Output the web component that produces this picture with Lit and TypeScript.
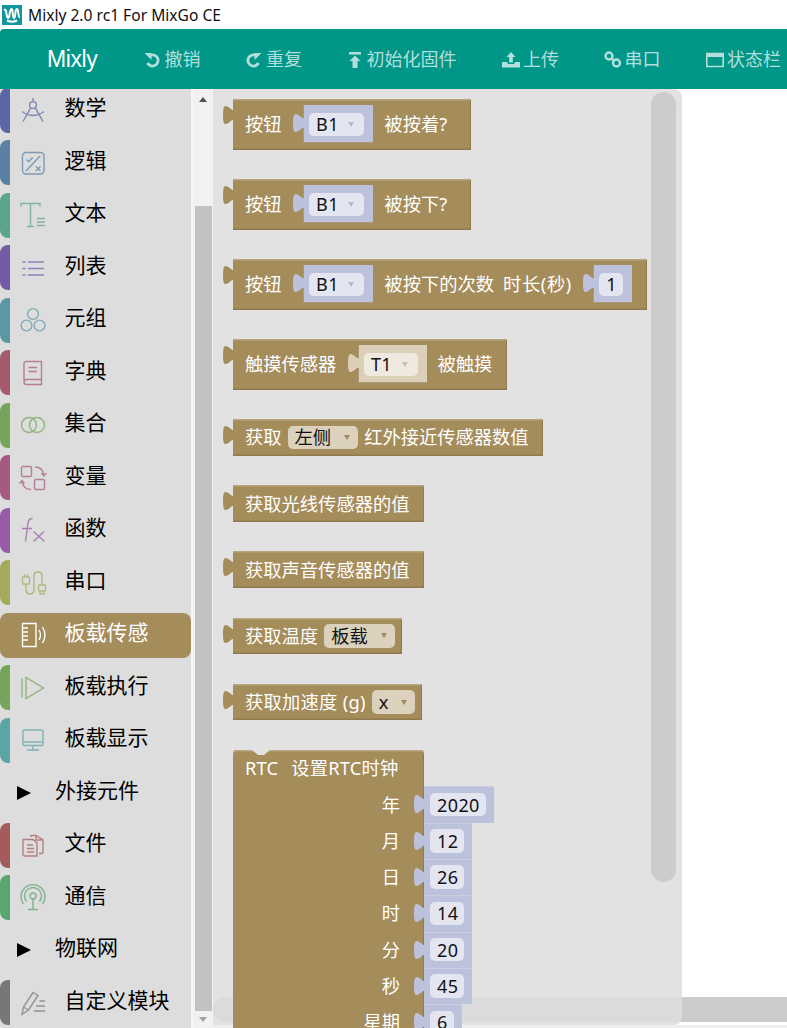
import { LitElement, html, css, svg } from "lit";
import { customElement } from "lit/decorators.js";

const icons: Record<string, any> = {
  math: svg`<circle cx="13" cy="8" r="3.4"/><path d="M13 1v3.5M10.8 10.6 3 24.5M15.2 10.6 23 24.5M2 14.5q11 8 22 0"/>`,
  logic: svg`<rect x="2.5" y="2.5" width="21.5" height="21.5" rx="3.5"/><path d="M6 21 20 6M6.5 9.5l2.2 2.2 4-4.2M16 16.5l4.5 4.5M20.5 16.5 16 21"/>`,
  text: svg`<path d="M1 4.5V1.5H20V4.5M10.5 1.5V24.5M7 24.5H14M17 16.5H25M17 20H25M17 23.5H25"/>`,
  list: svg`<path d="M2.5 7H5.5M8 7H24M2.5 13.5H5.5M8 13.5H24M2.5 20H5.5M8 20H24"/>`,
  tuple: svg`<circle cx="13" cy="7" r="5.4"/><circle cx="6.5" cy="18.5" r="5.4"/><circle cx="19.5" cy="18.5" r="5.4"/>`,
  dict: svg`<path d="M4 20V4q0-2.5 2.5-2.5H21.5V19.5H6.5Q4 19.5 4 22T6.5 24.5H22M21.5 19.5V24.5M8.5 7.5H17M8.5 11.5H17"/>`,
  set: svg`<circle cx="9" cy="13" r="7.5"/><circle cx="17" cy="13" r="7.5"/>`,
  var: svg`<rect x="1.5" y="1.5" width="10" height="10" rx="1.5"/><rect x="14.5" y="14.5" width="10" height="10" rx="1.5"/><path d="M15 2q8 0 9 8.5M21.5 8l2.5 3 2.5-3M11 24.5q-8 0-9-8.5M-.5 18.5 2 15.5l2.5 3"/>`,
  func: svg`<path d="M12.5 1.5Q8.5 1.5 8 6L5.5 24.5M2 11.5H12M13.5 14.5 24.5 24.5M24 14.5 13.5 24.5"/>`,
  serial: svg`<rect x="2.5" y="7" width="7" height="7" rx="1"/><path d="M4.5 7V4M7.5 7V4M6 14V20q0 4 4 4t4-4V5.5q0-3.5 4-3.5t4 3.5V15"/><rect x="18.5" y="15" width="7" height="6" rx="1"/><path d="M20 21V24H24V21"/>`,
  sensor: svg`<path d="M2.5 1.5H16V24.5H2.5ZM2.5 6H8M2.5 10H8M2.5 14H8M2.5 18H8M19 8q3 5 0 10M22.5 5q5 8 0 16"/>`,
  exec: svg`<path d="M2 3.5V22.5M6 2.5V23.5L23.5 13Z"/>`,
  display: svg`<rect x="3" y="3" width="20" height="15.5" rx="1.5"/><path d="M3 15H23M13 18.5V22.5M7 23H19"/>`,
  file: svg`<path d="M3 7.5H13L17 11V24H5Q3 24 3 22ZM7 13H13M7 16.5H14M7 20H14M11 5V3.5H16L23 8V20Q23 21.5 21 21.5H19M16 3.5V8H22"/>`,
  comm: svg`<circle cx="13" cy="11" r="3"/><path d="M6.5 16.5a8.5 8.5 0 1 1 13 0M3.5 19a12 12 0 1 1 19 0M13 14V24.5M8 24.5H18"/>`,
  custom: svg`<path d="M2 24.5 3.5 17 13 2.5 18 5.5 8.5 20ZM14 21H25M16 16H25M19.5 11H25M3.5 17l5 3"/>`,
};

const cats = [
  { k: "math", l: "数学", c: "#5b67a5" },
  { k: "logic", l: "逻辑", c: "#5b80a5" },
  { k: "text", l: "文本", c: "#5ba58c" },
  { k: "list", l: "列表", c: "#745ba5" },
  { k: "tuple", l: "元组", c: "#5b97a5" },
  { k: "dict", l: "字典", c: "#a55b6e" },
  { k: "set", l: "集合", c: "#74a55b" },
  { k: "var", l: "变量", c: "#a55b80" },
  { k: "func", l: "函数", c: "#995ba5" },
  { k: "serial", l: "串口", c: "#a5aa5b" },
  { k: "sensor", l: "板载传感", c: "#a58c5b", sel: true },
  { k: "exec", l: "板载执行", c: "#74a55b" },
  { k: "display", l: "板载显示", c: "#5ba5a5" },
  { l: "外接元件" },
  { k: "file", l: "文件", c: "#a55b5b" },
  { k: "comm", l: "通信", c: "#5ba56e" },
  { l: "物联网" },
  { k: "custom", l: "自定义模块", c: "#777777" },
];

const tools = [
  { l: "撤销", w: 17, i: svg`<path d="M4.5 5.5A5.6 5.6 0 1 1 3.5 12" fill="none" stroke="currentColor" stroke-width="2.8"/><path d="M.5 2H7.5V9Z" fill="currentColor"/>` },
  { l: "重复", w: 17, i: svg`<path d="M11.5 5.5A5.6 5.6 0 1 0 12.5 12" fill="none" stroke="currentColor" stroke-width="2.8"/><path d="M15.5 2H8.5V9Z" fill="currentColor"/>` },
  { l: "初始化固件", w: 16, i: svg`<path d="M2 1H14V3.5H2ZM8 4.5 13.5 10H10.5V17H5.5V10H2.5Z" fill="currentColor"/>` },
  { l: "上传", w: 18, i: svg`<path d="M9 1 13.5 6H10.8V11.5H7.2V6H4.5ZM0 11H5L6 13H12L13 11H18V16.5H0Z" fill="currentColor"/>` },
  { l: "串口", w: 17, i: svg`<g fill="none" stroke="currentColor" stroke-width="2.4"><circle cx="5" cy="5" r="3.5"/><circle cx="12.5" cy="12" r="3.5"/><path d="M7.5 7.5 10 9.5"/></g>` },
  { l: "状态栏", w: 18, i: svg`<path d="M.8 2.5H17.2V15.5H.8Z" fill="none" stroke="currentColor" stroke-width="1.6"/><path d="M.8 2.5H17.2V6H.8Z" fill="currentColor"/>` },
];

const tab = () => html`<svg class="tab" viewBox="0 0 11 20" aria-hidden="true"><path d="M11 15C9 14 7 18 3 19 1 19.500 0 17 0 10 0 3 1 .5 3 1 7 2 9 6 11 5Z"/></svg>`;
const arrow = html`<i class="arrow"></i>`;
const slot = (t: string, dd = false, warm = false) => html`<span class="slot ${warm ? "warm" : ""}">${tab()}<span class="field ${dd ? "dd" : ""}">${t}${dd ? arrow : ""}</span></span>`;
const drop = (t: string) => html`<span class="field menu">${t}${arrow}</span>`;

const blocks: any[] = [
  { w: 238, tall: 1, c: html`<span>按钮</span>${slot("B1", true)}<span class="after">被按着?</span>` },
  { w: 238, tall: 1, c: html`<span>按钮</span>${slot("B1", true)}<span class="after">被按下?</span>` },
  { w: 414, tall: 1, c: html`<span>按钮</span>${slot("B1", true)}<span class="after">被按下的次数</span><span class="dur">时长(秒)</span>${slot("1")}` },
  { w: 274, tall: 1, c: html`<span>触摸传感器</span>${slot("T1", true, true)}<span class="after">被触摸</span>` },
  { w: 310, c: html`<span>获取</span>${drop("左侧")}<span>红外接近传感器数值</span>` },
  { w: 191, c: html`<span>获取光线传感器的值</span>` },
  { w: 191, c: html`<span>获取声音传感器的值</span>` },
  { w: 169, c: html`<span>获取温度</span>${drop("板载")}` },
  { w: 189, c: html`<span class="accel">获取加速度 (g)</span>${drop("x")}` },
];
const rtc = [["年", "2020"], ["月", "12"], ["日", "26"], ["时", "14"], ["分", "20"], ["秒", "45"], ["星期", "6"]];

@customElement("app-root")
export class AppRoot extends LitElement {
  static styles = css`
    :host { display: block; width: 787px; height: 1028px; overflow: hidden; background: #fff; position: relative;
      font-family: "Noto Sans", "Noto Sans CJK SC", sans-serif; }
    .title { height: 29px; display: flex; align-items: center; gap: 6px; padding-left: 2px; box-sizing: border-box; font-size: 15.6px; color: #111; }
    .title svg { width: 20px; height: 20px; display: block; }
    .bar { height: 60px; background: #009688; border-radius: 4px 0 0 0; display: flex; align-items: center; padding-left: 47px; gap: 45.5px; color: #b2dfdb; white-space: nowrap; }
    .brand { font: 23px "Liberation Sans", sans-serif; color: #fff; letter-spacing: -.4px; margin-right: 1.5px; }
    .tool { display: flex; align-items: center; gap: 3px; font-size: 18px; line-height: 24px; }
    .tool svg { display: block; height: 17px; overflow: visible; }
    .main { display: flex; height: 939px; }
    .side { width: 191px; flex: none; background: #ddd; overflow: hidden; display: flex; flex-direction: column; gap: 7.5px; }
    .side > :first-child { margin-top: -1.5px; }
    .cat { height: 45px; flex: none; display: flex; align-items: center; font-size: 21px; line-height: 28px; color: #000; box-sizing: border-box; border-radius: 8px; white-space: nowrap; }
    .cat .strip { width: 10px; height: 100%; border-radius: 8px 0 0 8px; flex: none; }
    .cat .ico { width: 26px; height: 26px; margin: 0 19px 0 9.5px; flex: none; fill: none; stroke-width: 1.4; opacity: .72; overflow: visible; }
    .cat span { position: relative; top: -3px; }
    .cat.sel { background: #a58c5b; color: #fff; }
    .cat.sel .strip { background: transparent !important; }
    .cat.sel .ico { stroke: #fff !important; opacity: 1; }
    .cat.group { padding-left: 17px; gap: 24px; }
    .cat.group i { border-left: 14px solid #000; border-top: 7.5px solid transparent; border-bottom: 7.5px solid transparent; }
    .scroll { width: 22px; flex: none; background: #f1f1f1; display: flex; flex-direction: column; align-items: center; box-sizing: border-box; border-left: 2px solid #f7f7f7; }
    .scroll .up { margin-top: 8px; height: 109px; flex: none; }
    .scroll .up i, .scroll .dn i { display: block; border-left: 4.5px solid transparent; border-right: 4.5px solid transparent; }
    .scroll .up i { border-bottom: 5px solid #505050; }
    .thumb { width: 17px; height: 805px; background: #c1c1c1; flex: none; }
    .scroll .dn { margin-top: 6px; }
    .scroll .dn i { border-top: 5px solid #a3a3a3; }
    .ws { position: relative; flex: 1; }
    .hbar { position: absolute; left: 0; right: 0; top: 908px; height: 25px; background: #ccc; border-radius: 12px 0 0 12px; }
    .foot { position: absolute; left: 0; right: 0; top: 936px; height: 3px; background: #eee; }
    .fly { position: absolute; left: 0; top: 0; width: 469px; height: 936px; background: rgba(221,221,221,.85); border-radius: 0 8px 8px 0; padding: 10px 0 0 20px; box-sizing: border-box; display: flex; flex-direction: column; gap: 29.4px; }
    .vbar { position: absolute; left: 438px; top: 3px; width: 25px; height: 790px; background: #ccc; border-radius: 12.5px; }
    .block { position: relative; flex: none; height: 36.8px; display: flex; align-items: center; gap: 6px; padding-left: 12px; box-sizing: border-box; background: #a58c5b; color: #fff; font-size: 18.3px; line-height: 24px; white-space: nowrap;
      box-shadow: inset 0 1.5px 0 #b8a57f, inset -1px 0 0 #8f794e, inset 0 -1.5px 0 #8f794e; }
    .block.tall { height: 50.6px; gap: 0; }
    .accel { letter-spacing: .25px; }
    .tab { position: absolute; left: -10.5px; top: 6px; width: 11px; height: 20px; fill: #a58c5b; display: block; }
    .slot { position: relative; margin-left: 21.5px; height: 38px; padding: 0 9px 0 6px; display: flex; align-items: center; background: #bcc2dc; box-sizing: border-box; box-shadow: inset 1px 0 0 #a79a78, inset 0 -1px 0 #a79a78; }
    .slot .tab { fill: #bcc2dc; left: -10px; top: 8px; }
    .slot.warm { background: #dccfb8; }
    .slot.warm .tab { fill: #dccfb8; }
    .field { height: 23.5px; display: flex; align-items: center; padding: 0 6px 0 7px; border-radius: 5px; background: #e3e5f1; color: #111; font-size: 18px; letter-spacing: .4px; }
    .slot.warm .field { background: #f0e9df; }
    .field.dd { padding-right: 10px; gap: 9.5px; }
    .field.menu { background: #dbd1bc; padding-right: 8px; gap: 13px; letter-spacing: 0; font-size: 18.3px; }
    .arrow { display: block; border-left: 3.5px solid transparent; border-right: 3.5px solid transparent; border-top: 5px solid #a08a5f; }
    .slot .arrow { border-top-color: #b4b9d2; }
    .slot.warm .arrow { border-top-color: #cfc0a4; }
    .after { margin-left: 11px; }
    .dur { margin-left: 9px; letter-spacing: .6px; }
    .rtc { flex: none; width: 280px; position: relative; color: #fff; font-size: 18.3px; line-height: 24px; }
    .rtc .head { width: 191px; height: 36.5px; background: #a58c5b; border-radius: 4px 4px 0 0; box-sizing: border-box; padding: 6px 0 0 12px; box-shadow: inset 0 1.5px 0 #b8a57f, inset -1px 0 0 #8f794e; white-space: nowrap; display: flex; gap: 13px; letter-spacing: .2px; }
    .notch { position: absolute; left: 19px; top: 0; width: 18px; height: 6px; fill: #e2e2e2; display: block; }
    .row { display: flex; height: 36.3px; }
    .row .lbl { width: 191px; flex: none; background: #a58c5b; box-sizing: border-box; padding: 0 24px 0 0; box-shadow: inset -1px 0 0 #8f794e; display: flex; align-items: center; justify-content: flex-end; }
    .row .slot { margin: 0; height: 100%; padding: 0 8px 0 6px; border-radius: 0 2px 0 0; box-shadow: inset 0 1px 0 #c9cee3; }
  `;

  render() {
    return html`
      <div class="title">
        <svg viewBox="0 0 20 20" aria-hidden="true"><rect width="20" height="20" fill="#14969a"/><path d="M2 5c3-2 2 7 4 8 2 .5 1-8 3.5-9 2 0 .5 9 2.5 9 2-.5 .5-9 3-9 2 .5 .5 8 3 8M5 15.5q5 2.5 10 0" fill="none" stroke="#fff" stroke-width="2"/></svg>
        <span>Mixly 2.0 rc1 For MixGo CE</span>
      </div>
      <div class="bar">
        <span class="brand">Mixly</span>
        ${tools.map(t => html`<span class="tool"><svg viewBox="0 0 ${t.w} 17" style="width:${t.w}px">${t.i}</svg>${t.l}</span>`)}
      </div>
      <div class="main">
        <div class="side">
          ${cats.map(c => c.k ? html`
            <div class="cat ${c.sel ? "sel" : ""}">
              <b class="strip" style="background:${c.c}"></b>
              <svg class="ico" viewBox="0 0 26 26" style="stroke:${c.c}" aria-hidden="true">${icons[c.k]}</svg>
              <span>${c.l}</span>
            </div>` : html`<div class="cat group"><i></i><span>${c.l}</span></div>`)}
        </div>
        <div class="scroll">
          <div class="up"><i></i></div>
          <div class="thumb"></div>
          <div class="dn"><i></i></div>
        </div>
        <div class="ws">
          <div class="hbar"></div>
          <div class="foot"></div>
          <div class="fly">
            <div class="vbar"></div>
            ${blocks.map(b => html`<div class="block ${b.tall ? "tall" : ""}" style="width:${b.w}px">${tab()}${b.c}</div>`)}
            <div class="rtc">
              <div class="head"><span>RTC</span><span>设置RTC时钟</span></div>
              <svg class="notch" viewBox="0 0 18 6" aria-hidden="true"><path d="M0 0H18L12 5H6Z"/></svg>
              ${rtc.map(r => html`<div class="row"><span class="lbl">${r[0]}</span>${slot(r[1])}</div>`)}
            </div>
          </div>
        </div>
      </div>
    `;
  }
}
